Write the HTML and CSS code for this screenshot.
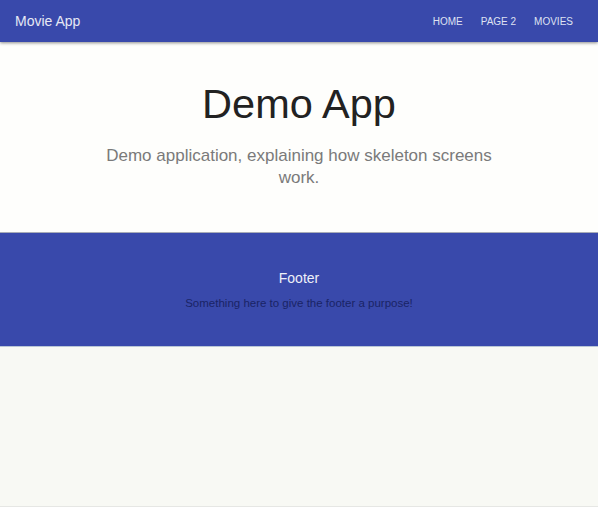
FILE: index.html
```html
<!DOCTYPE html>
<html lang="en">
<head>
<meta charset="utf-8">
<title>Movie App</title>
<link rel="stylesheet" href="styles.css">
</head>
<body>
<header class="navbar">
  <a class="brand" href="#">Movie App</a>
  <nav class="nav">
    <a class="nav-link" href="#">Home</a>
    <a class="nav-link" href="#">Page 2</a>
    <a class="nav-link" href="#">Movies</a>
  </nav>
</header>
<section class="hero">
  <h1 class="hero-title">Demo App</h1>
  <p class="hero-sub">Demo application, explaining how skeleton screens work.</p>
</section>
<footer class="footer">
  <h2 class="footer-title">Footer</h2>
  <p class="footer-text">Something here to give the footer a purpose!</p>
</footer>
<main class="rest"></main>
</body>
</html>
```

FILE: styles.css
```css
* { box-sizing: border-box; }
html, body { margin: 0; padding: 0; }
body {
  font-family: "Liberation Sans", Arial, sans-serif;
  background: #fdfdfb;
  height: 507px;
  display: flex;
  flex-direction: column;
}
.navbar {
  height: 42px;
  background: #3949ab;
  display: flex;
  align-items: center;
  justify-content: space-between;
  padding: 0 25px 0 15px;
  box-shadow: 0 1px 3px rgba(0,0,0,0.45);
  position: relative;
  z-index: 1;
  flex: none;
}
.brand {
  color: #e6e8f4;
  font-size: 14px;
  text-decoration: none;
}
.nav { display: flex; gap: 18px; }
.nav-link {
  color: #dfe2f2;
  font-size: 10px;
  text-transform: uppercase;
  text-decoration: none;
}
.hero {
  background: #fefefc;
  padding: 38px 20px 0;
  height: 190px;
  text-align: center;
  flex: none;
}
.hero-title {
  margin: 0;
  font-size: 41.5px;
  line-height: 48px;
  font-weight: normal;
  color: #222;
}
.hero-sub {
  margin: 17px auto 0;
  max-width: 410px;
  font-size: 17px;
  line-height: 22px;
  color: #7a7a7a;
}
.footer {
  background: #3949ab;
  border-top: 1px solid #a8acb8;
  height: 114px;
  text-align: center;
  padding-top: 36px;
  flex: none;
}
.footer-title {
  margin: 0;
  font-size: 14px;
  line-height: 18px;
  font-weight: normal;
  color: #eef0f8;
}
.footer-text {
  margin: 9px 0 0;
  font-size: 11.5px;
  line-height: 14px;
  color: #1a2466;
}
.rest {
  flex: 1;
  background: #f8f9f4;
  border-top: 1px solid #b9c6d6;
  border-bottom: 1px solid #e6e7e4;
}
```
